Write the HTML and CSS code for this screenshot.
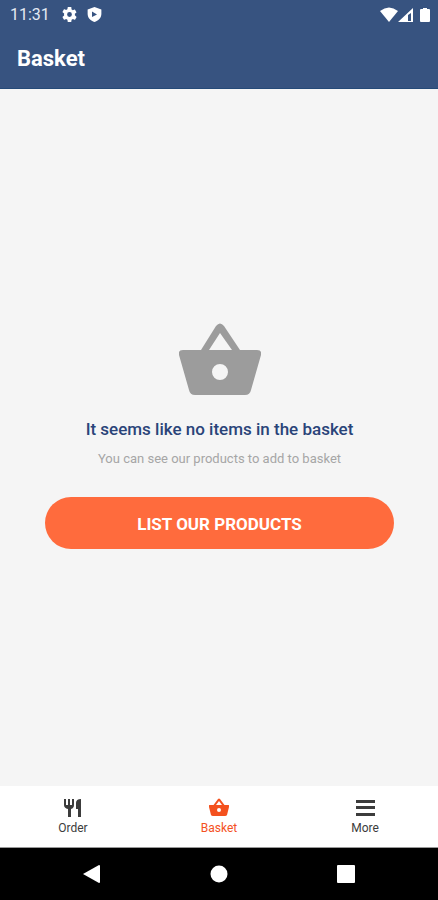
FILE: index.html
```html
<!DOCTYPE html>
<html lang="en">

<head>
  <meta charset="UTF-8" />
  <meta name="viewport" content="width=device-width, initial-scale=1" />
  <title>Basket</title>
  <link rel="stylesheet" href="styles.css">
</head>

<body>
  <div class="status-bar">
    <span class="clock">11:31</span>
    <svg class="status-icon" viewBox="2 2 20 20" aria-hidden="true">
      <path d="M19.14 12.94c.04-.3.06-.61.06-.94s-.02-.64-.07-.94l2.03-1.58a.49.49 0 0 0 .12-.61l-1.92-3.32a.49.49 0 0 0-.59-.22l-2.39.96a7 7 0 0 0-1.62-.94l-.36-2.54A.48.48 0 0 0 13.92 2h-3.84a.48.48 0 0 0-.48.41l-.36 2.54a7 7 0 0 0-1.62.94l-2.39-.96a.48.48 0 0 0-.59.22L2.74 8.47a.48.48 0 0 0 .12.61l2.03 1.58a6 6 0 0 0 0 2.68l-2.03 1.58a.49.49 0 0 0-.12.61l1.92 3.32c.12.22.37.29.59.22l2.39-.96c.5.38 1.03.7 1.62.94l.36 2.54c.05.24.24.41.48.41h3.84c.24 0 .44-.17.47-.41l.36-2.54a7 7 0 0 0 1.62-.94l2.39.96c.22.08.47 0 .59-.22l1.92-3.32a.48.48 0 0 0-.12-.61zM12 15.2a3.2 3.2 0 1 1 0-6.4 3.2 3.2 0 0 1 0 6.4z" />
    </svg>
    <svg class="status-icon" viewBox="0 0 24 24" aria-hidden="true">
      <path fill-rule="evenodd" d="M12 0 L23 4 V11 C23 17 18 22 12 24 C6 22 1 17 1 11 V4 Z M8 7 V16 L16 12 Z" />
    </svg>
    <svg class="signals" viewBox="0 0 50 16" aria-hidden="true">
      <path d="M0 4 Q9 -3 18 4 L9 15 Z" />
      <path fill-rule="evenodd" d="M33 1 V15 H18 Z M28 8 V14 H31 V6 Z" />
      <path d="M43 1 H47 V2 H49 Q50 2 50 3 V14 Q50 15 49 15 H41 Q40 15 40 14 V3 Q40 2 41 2 H43 Z" />
    </svg>
  </div>

  <header class="app-bar">
    <h1>Basket</h1>
  </header>

  <main class="empty">
    <svg class="empty-icon" viewBox="0 0 82 72" aria-hidden="true">
      <path fill-rule="evenodd" d="M22 27 L37 3 Q41 -2 45 3 L61 27 H78 Q83 27 82 32 L72 67 Q71 72 66 72 H16 Q11 72 10 67 L0 32 Q-1 27 4 27 Z M30 27 H53 L41 10 Z M41 41 A8 8 0 1 0 41 57 A8 8 0 1 0 41 41 Z" />
    </svg>
    <h2>It seems like no items in the basket</h2>
    <p>You can see our products to add to basket</p>
    <button class="btn" type="button">LIST OUR PRODUCTS</button>
  </main>

  <nav class="tabs">
    <a class="tab" href="#order">
      <svg viewBox="0 0 20 20" aria-hidden="true">
        <path d="M1 1 H3 V7 H5 V1 H7 V7 H9 V1 H11 V7 Q11 10 8 11 V19 H5 V11 Q1 10 1 7 Z M18 1 V19 H15 V11 H13 V5 Q13 1 18 1 Z" />
      </svg>
      Order
    </a>
    <a class="tab active" href="#basket" aria-current="page">
      <svg viewBox="0 0 20 20" aria-hidden="true">
        <path fill-rule="evenodd" d="M4.5 7 L9 1 Q10 0 11 1 L15.5 7 H19.5 Q20.5 7 20 9 L18 17 Q17.5 18 16 18 H4 Q2.5 18 2 17 L0 9 Q-0.5 7 0.5 7 Z M7 7 H13 L10 3 Z M10 10 A2 2 0 1 0 10 14 A2 2 0 1 0 10 10 Z" />
      </svg>
      Basket
    </a>
    <a class="tab" href="#more">
      <svg viewBox="0 0 20 20" aria-hidden="true">
        <path d="M1 2 H20 V5 H1 Z M1 8 H20 V11 H1 Z M1 15 H20 V18 H1 Z" />
      </svg>
      More
    </a>
  </nav>

  <div class="system-nav">
    <button type="button" aria-label="Back">
      <svg viewBox="0 0 18 18"><path d="M0 9 L16 0 Q17 0 17 1 V17 Q17 18 16 18 Z" /></svg>
    </button>
    <button type="button" aria-label="Home">
      <svg viewBox="0 0 18 18"><circle cx="9" cy="9" r="8.5" /></svg>
    </button>
    <button type="button" aria-label="Recent apps">
      <svg viewBox="0 0 18 18"><rect width="18" height="18" rx="1" /></svg>
    </button>
  </div>
</body>

</html>
```

FILE: styles.css
```css
* {
  box-sizing: border-box;
}

body {
  margin: 0;
  min-height: 100vh;
  display: flex;
  flex-direction: column;
  background-color: #f5f5f5;
  font-family: Roboto, sans-serif;
}

h1,
h2,
p {
  margin: 0;
}

svg {
  display: block;
  fill: currentColor;
}

/* status bar */
.status-bar {
  display: flex;
  align-items: center;
  gap: 10px;
  height: 29px;
  padding: 0 8px 0 10px;
  background-color: #375380;
  color: #fff;
}

.clock {
  margin-right: 2px;
  font-size: 16px;
  line-height: 28px;
  color: #e3e9f3;
}

.status-icon {
  width: 15px;
  height: 15px;
}

.signals {
  width: 50px;
  height: 16px;
  margin-left: auto;
}

/* app bar */
.app-bar {
  display: flex;
  align-items: center;
  height: 60px;
  padding: 0 17px;
  background-color: #375380;
  border-bottom: 1px solid #254a78;
  color: #fff;
}

.app-bar h1 {
  font-size: 22px;
  font-weight: 700;
  line-height: 28px;
}

/* empty basket */
.empty {
  flex: 1;
  display: flex;
  flex-direction: column;
  align-items: center;
  justify-content: center;
  padding: 0 44px 4px 45px;
  text-align: center;
}

.empty-icon {
  width: 82px;
  height: 72px;
  color: #9c9c9c;
}

.empty h2 {
  margin-top: 22px;
  font-size: 17px;
  font-weight: 500;
  line-height: 24px;
  color: #2a4479;
}

.empty p {
  margin-top: 8px;
  font-size: 13px;
  line-height: 20px;
  color: #a6a6a6;
}

.btn {
  width: 100%;
  height: 52px;
  margin-top: 28px;
  padding: 2px 0 0;
  border: 0;
  border-radius: 26px;
  background-color: #ff6b3d;
  color: #fff;
  font-family: inherit;
  font-size: 17px;
  font-weight: 700;
}

/* bottom tabs */
.tabs {
  display: grid;
  grid-template-columns: repeat(3, 1fr);
  height: 62px;
  padding-top: 12px;
  background-color: #fff;
  border-bottom: 1px solid #999;
}

.tab {
  display: flex;
  flex-direction: column;
  align-items: center;
  font-size: 12px;
  line-height: 20px;
  color: #3c3c3c;
  text-decoration: none;
}

.tab svg {
  width: 20px;
  height: 20px;
}

.tab.active {
  color: #f4511e;
}

/* system navigation */
.system-nav {
  display: grid;
  grid-template-columns: repeat(3, 1fr);
  height: 52px;
  padding: 0 29px;
  background-color: #000;
}

.system-nav button {
  display: flex;
  align-items: center;
  justify-content: center;
  padding: 0;
  border: 0;
  background: none;
  color: #fff;
}

.system-nav svg {
  width: 18px;
  height: 18px;
}
```
